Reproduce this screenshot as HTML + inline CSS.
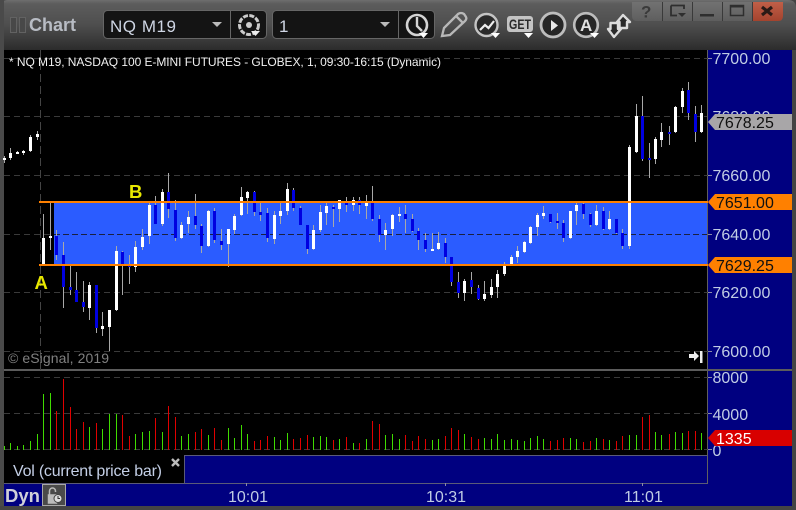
<!DOCTYPE html>
<html>
<head>
<meta charset="utf-8">
<title>Chart</title>
<style>
html,body{margin:0;padding:0;background:#444;width:796px;height:510px;overflow:hidden}
svg{display:block;position:absolute;left:0;top:0}
text{font-family:"Liberation Sans",sans-serif}
</style>
</head>
<body>
<svg width="796" height="510" viewBox="0 0 796 510" xmlns="http://www.w3.org/2000/svg">
<defs>
<linearGradient id="hd" x1="0" y1="0" x2="0" y2="1"><stop offset="0" stop-color="#6e6e6e"/><stop offset=".08" stop-color="#5c5c5c"/><stop offset=".5" stop-color="#4e4e4e"/><stop offset="1" stop-color="#2c2c2c"/></linearGradient>
<linearGradient id="wb" x1="0" y1="0" x2="0" y2="1"><stop offset="0" stop-color="#727272"/><stop offset="1" stop-color="#5e5e5e"/></linearGradient>
<linearGradient id="cl" x1="0" y1="0" x2="0" y2="1"><stop offset="0" stop-color="#c05f48"/><stop offset="1" stop-color="#a4432e"/></linearGradient>
</defs>
<rect width="796" height="510" fill="#444"/>
<path d="M0 50V8Q0 0 8 0H788Q796 0 796 8V50Z" fill="url(#hd)"/>
<rect x="0" y="0" width="4" height="510" fill="#4a4a4a"/>
<rect x="792" y="50" width="4" height="460" fill="#444"/>
<rect x="0" y="506" width="796" height="4" fill="#444"/>

<!-- panels -->
<rect x="4" y="50" width="703" height="319" fill="#000"/>
<rect x="708" y="50" width="84" height="456" fill="#000080"/>
<rect x="4" y="370" width="703" height="85" fill="#000"/>
<rect x="4" y="455" width="180" height="28" fill="#000"/>
<rect x="184" y="455" width="524" height="28" fill="#000080"/>
<rect x="4" y="483" width="788" height="23" fill="#000080"/>
<rect x="184" y="455" width="524" height="1" fill="#5a5a78"/>
<rect x="184" y="455" width="1" height="28" fill="#5a5a78"/>
<rect x="4" y="483" width="704" height="1" fill="#5a5a78"/>
<rect x="707" y="50" width="1" height="434" fill="#606060"/>
<rect x="4" y="369" width="788" height="2" fill="#5c5c5c"/>

<!-- band -->
<rect x="54" y="202" width="653" height="63" fill="#2b5cff"/>

<g shape-rendering="crispEdges" fill="none">
<!-- grid -->
<path d="M4 58.5H712M4 116.5H707M4 175.5H712M4 292.5H712M4 351.5H712M4 377.5H712M4 413.5H712M4 449.5H712" stroke="#3a3a3a" stroke-dasharray="6 4"/>
<path d="M4 234.5H54" stroke="#3a3a3a" stroke-dasharray="6 4"/>
<path d="M54 234.5H707" stroke="#1a2040" stroke-dasharray="6 3"/>
<path d="M40.5 50V370" stroke="#444" stroke-dasharray="8 4"/>
<!-- axis ticks -->
<path d="M708 58.500H712M708 175.500H712M708 234.500H712M708 292.500H712M708 351.500H712M708 377.500H712M708 413.500H712M708 449.500H712" stroke="#8a8aa8"/>
<path d="M246.500 483V486M445.500 483V486M642.500 483V486" stroke="#8a8aa8"/>

<!-- wicks -->
<path stroke="#a8a8a8" d="M4.5 156V163M10.5 148V160M17.5 151V154M23.5 150V155M30.5 135V152M37.5 131V140M43.5 214V265M50.5 202V250M56.5 230V260M63.5 242V308M70.5 264V295M76.5 272V302M83.5 281V312M89.5 282V320M96.5 285V333M102.5 312V336M109.5 310V351M116.5 246V311M122.5 251V295M129.5 255V284M135.5 241V272M142.5 229V250M149.5 203V244M155.5 196V224M162.5 189V226M168.5 173V218M175.5 200V241M181.5 222V239M188.5 211V233M195.5 194V229M201.5 224V253M208.5 210V247M214.5 208V243M221.5 229V250M228.5 229V267M234.5 214V234M241.5 187V216M247.5 191V214M254.5 191V216M260.5 201V221M267.5 208V242M274.5 211V244M280.5 203V224M287.5 183V215M293.5 188V211M300.5 206V225M307.5 225V254M313.5 225V250M320.5 205V232M326.5 203V225M333.5 205V227M339.5 200V222M346.5 197V212M353.5 197V211M359.5 197V214M366.5 195V219M372.5 186V221M379.5 215V242M385.5 223V250M392.5 214V236M399.5 207V222M405.5 205V233M412.5 214V232M418.5 228V250M425.5 233V252M432.5 233V251M438.5 232V250M445.5 238V263M451.5 257V286M458.5 272V298M464.5 279V301M471.5 272V294M478.5 285V300M484.5 281V301M491.5 279V298M497.5 270V298M504.5 262V276M511.5 255V266M517.5 246V263M524.5 241V253M530.5 226V244M537.5 213V236M543.5 206V219M550.5 214V223M557.5 213V229M563.5 220V242M570.5 211V239M576.5 203V225M583.5 203V219M590.5 213V227M596.5 205V226M603.5 207V230M609.5 211V230M616.5 219V234M622.5 229V249M629.5 145V249M636.5 104V153M642.5 96V161M649.5 143V178M655.5 137V164M661.5 123V147M669.5 126V145M675.5 106V133M682.5 88V113M688.5 82V120M695.5 106V142M701.5 105V133"/>
<!-- white bodies -->
<path stroke="#fff" stroke-width="3" d="M4.5 158V160M10.5 153V158M17.5 152V154M23.5 151V153M30.5 137V151M37.5 134V137M43.5 238V265M50.5 236V238M89.5 285V308M102.5 326V329M109.5 310V327M116.5 251V310M135.5 247V267M142.5 237V247M149.5 205V236M162.5 192V224M181.5 225V238M188.5 217V224M208.5 211V246M228.5 229V244M234.5 216V230M241.5 197V215M247.5 192V198M274.5 215V239M280.5 211V216M287.5 189V211M313.5 230V249M320.5 212V230M326.5 206V213M339.5 200V209M353.5 200V205M366.5 202V206M385.5 230V235M392.5 215V229M399.5 214V216M432.5 249V251M438.5 243V249M464.5 281V293M484.5 294V299M491.5 287V295M497.5 274V287M504.5 265V274M511.5 257V265M517.5 251V257M524.5 242V252M530.5 227V243M537.5 215V227M543.5 213V216M570.5 211V238M576.5 205V211M596.5 211V225M609.5 219V229M629.5 147V246M636.5 116V152M655.5 139V159M661.5 132V140M675.5 107V132M682.5 91V107M701.5 113V132"/>
<!-- blue bodies -->
<path stroke="#0000e0" stroke-width="3" d="M56.5 236V255M63.5 255V287M70.5 287V290M76.5 290V302M83.5 302V307M96.5 285V328M122.5 252V265M129.5 265V267M155.5 205V224M168.5 192V209M175.5 210V238M195.5 216V225M201.5 226V246M214.5 211V240M221.5 241V245M254.5 192V212M260.5 212V215M267.5 213V238M293.5 190V208M300.5 208V225M307.5 225V249M333.5 207V209M346.5 203V205M359.5 200V205M372.5 203V219M379.5 219V235M405.5 214V219M412.5 219V231M418.5 231V240M425.5 240V249M445.5 243V257M451.5 257V282M458.5 282V293M471.5 280V287M478.5 288V299M550.5 214V222M557.5 221V223M563.5 223V238M583.5 204V214M590.5 214V225M603.5 211V229M616.5 219V233M622.5 233V246M642.5 116V159M649.5 158V160M669.5 132V134M688.5 90V113M695.5 114V132"/>

<!-- orange lines -->
<rect x="39" y="201" width="669" height="2" fill="#ff8000"/>
<rect x="39" y="264" width="669" height="2" fill="#ff8000"/>

<!-- green vol -->
<path stroke="#3fdc00" d="M4.5 446V450M10.5 443V450M17.5 446V450M23.5 445V450M30.5 441V450M37.5 434V450M43.5 394V450M50.5 393V450M89.5 427V450M102.5 429V450M109.5 414V450M116.5 414V450M135.5 434V450M142.5 432V450M149.5 431V450M162.5 432V450M181.5 436V450M188.5 434V450M208.5 435V450M228.5 428V450M234.5 438V450M241.5 425V450M247.5 434V450M274.5 437V450M280.5 440V450M287.5 433V450M313.5 437V450M320.5 436V450M326.5 437V450M339.5 439V450M353.5 443V450M366.5 439V450M385.5 435V450M392.5 434V450M399.5 439V450M432.5 440V450M438.5 439V450M464.5 434V450M484.5 438V450M491.5 439V450M497.5 434V450M504.5 440V450M511.5 439V450M517.5 440V450M524.5 441V450M530.5 438V450M537.5 436V450M543.5 439V450M570.5 438V450M576.5 439V450M596.5 438V450M609.5 440V450M629.5 435V450M636.5 435V450M655.5 432V450M661.5 435V450M675.5 432V450M682.5 433V450M701.5 433V450"/>
<!-- red vol -->
<path stroke="#e00000" d="M56.5 411V450M63.5 379V450M70.5 407V450M76.5 429V450M83.5 422V450M96.5 423V450M122.5 415V450M129.5 436V450M155.5 418V450M168.5 406V450M175.5 417V450M195.5 432V450M201.5 429V450M214.5 428V450M221.5 440V450M254.5 441V450M260.5 440V450M267.5 436V450M293.5 439V450M300.5 438V450M307.5 435V450M333.5 440V450M346.5 437V450M359.5 443V450M372.5 421V450M379.5 424V450M405.5 435V450M412.5 441V450M418.5 436V450M425.5 439V450M445.5 436V450M451.5 428V450M458.5 430V450M471.5 437V450M478.5 439V450M550.5 441V450M557.5 440V450M563.5 438V450M583.5 442V450M590.5 441V450M603.5 439V450M616.5 441V450M622.5 436V450M642.5 417V450M649.5 415V450M669.5 434V450M688.5 431V450M695.5 431V450"/>
</g>

<!-- chart text -->
<text x="9" y="66" font-size="12" fill="#f0f0f0" textLength="432">* NQ M19, NASDAQ 100 E-MINI FUTURES - GLOBEX, 1, 09:30-16:15 (Dynamic)</text>
<text x="34.500" y="289" font-size="18.500" font-weight="bold" fill="#e8e800">A</text>
<text x="129" y="198" font-size="18.500" font-weight="bold" fill="#e8e800">B</text>
<text x="8" y="363" font-size="14" fill="#808080" textLength="101">© eSignal, 2019</text>
<text x="13" y="476" font-size="16" fill="#c4cfe6" textLength="149">Vol (current price bar)</text>
<path d="M172 459l7 7M179 459l-7 7" stroke="#bbb" stroke-width="2.400" fill="none"/>
<path d="M689 354h5v-3l5 5-5 5v-3h-5z" fill="#eee"/><rect x="700" y="351" width="2.500" height="12" fill="#eee"/>

<!-- axis labels -->
<g font-size="16" fill="#c0cce4">
<text x="712.500" y="64">7700.00</text>
<text x="712.500" y="122">7680.00</text>
<text x="712.500" y="181">7660.00</text>
<text x="712.500" y="240">7640.00</text>
<text x="712.500" y="298">7620.00</text>
<text x="712.500" y="357">7600.00</text>
<text x="712.500" y="383">8000</text>
<text x="712.500" y="420">4000</text>
<text x="712.500" y="456">0</text>
<text x="228" y="502">10:01</text>
<text x="426" y="502">10:31</text>
<text x="624" y="502">11:01</text>
</g>

<!-- price tags -->
<path d="M708 122l7-8h77v16h-77z" fill="#a8a6a8"/>
<text x="716" y="128" font-size="16" fill="#111">7678.25</text>
<path d="M708 202l7-8h77v16h-77z" fill="#ff8000"/>
<text x="716" y="208" font-size="16" fill="#111">7651.00</text>
<path d="M708 265l7-8h77v16h-77z" fill="#ff8000"/>
<text x="716" y="271" font-size="16" fill="#111">7629.25</text>
<path d="M708 438l7-8h77v16h-77z" fill="#d80000"/>
<text x="716" y="444" font-size="16" fill="#fff">1335</text>

<!-- bottom bar -->
<text x="5" y="502" font-size="18.500" font-weight="bold" fill="#d0d0d8">Dyn</text>
<rect x="42.500" y="484.500" width="23" height="21" fill="#4a4a4a" stroke="#a8a8a8"/>
<path d="M48.500 503v-8h8v8zM49.500 495v-4a3 3 0 0 1 6 0v1" fill="none" stroke="#bbb" stroke-width="1.500"/>
<rect x="49" y="495" width="7" height="8" fill="#bbb"/>
<circle cx="58" cy="498.500" r="4" fill="#ddd" stroke="#444"/>
<path d="M58 496v2.500h2" stroke="#333" fill="none"/>

<!-- title area -->
<rect x="10.500" y="17.500" width="6" height="15" fill="#484848" stroke="#626262"/>
<rect x="19.500" y="17.500" width="6" height="15" fill="#484848" stroke="#626262"/>
<text x="29" y="31" font-size="18" font-weight="bold" fill="#b8bcc4">Chart</text>

<!-- combos -->
<rect x="103.500" y="10.500" width="163" height="28" rx="4" fill="#141414" stroke="#666"/>
<path d="M230.500 11V38" stroke="#666"/>
<text x="110" y="32" font-size="17" fill="#cfd6e4" textLength="66">NQ M19</text>
<path d="M212 22h10l-5 5z" fill="#bbb"/>
<circle cx="249" cy="25" r="9.500" fill="none" stroke="#ccc" stroke-width="3" stroke-dasharray="5 1.400"/>
<circle cx="249" cy="25" r="3" fill="#ccc"/>
<path d="M251 31h9l-4.500 5z" fill="#eee"/>

<rect x="272.500" y="10.500" width="162" height="28" rx="4" fill="#141414" stroke="#666"/>
<path d="M398.500 11V38" stroke="#666"/>
<text x="279" y="32" font-size="17" fill="#cfd6e4">1</text>
<path d="M380 22h10l-5 5z" fill="#bbb"/>
<circle cx="417" cy="25" r="10" fill="none" stroke="#d4d4d4" stroke-width="2.600"/>
<path d="M417 17V26L422 31" fill="none" stroke="#d4d4d4" stroke-width="2.400"/>
<path d="M419 33h9l-4.500 5z" fill="#fff"/>

<!-- pencil -->
<path d="M442 36L444 28 458 14Q461 12 464 14L466 17Q467 19 465 21L450 35ZM456 16L463 23" fill="none" stroke="#b8b8b8" stroke-width="2.300"/>
<!-- chart circle -->
<circle cx="486.500" cy="25" r="11" fill="#2a2a2a" stroke="#c4c4c4" stroke-width="2.400"/>
<path d="M480 30L485 25 488.500 28 494 21" fill="none" stroke="#eee" stroke-width="2.200"/>
<path d="M491 33h9l-4.500 5z" fill="#fff"/>
<!-- GET -->
<rect x="507" y="16" width="26" height="16" rx="3" fill="#c4c4c4"/>
<text x="509" y="29" font-size="14" font-weight="bold" fill="#2a2a2a" textLength="22" lengthAdjust="spacingAndGlyphs">GET</text>
<path d="M524 33h9l-4.500 5z" fill="#fff"/>
<!-- play -->
<circle cx="553" cy="25" r="12" fill="#262626" stroke="#bdbdbd" stroke-width="2.800"/>
<path d="M551 20V31L558 25.500Z" fill="#e8e8e8"/>
<!-- A -->
<circle cx="586" cy="25" r="11.800" fill="#262626" stroke="#bdbdbd" stroke-width="2.600"/>
<text x="580" y="31" font-size="17" font-weight="bold" fill="#e0e0e0">A</text>
<path d="M590 33h9l-4.500 5z" fill="#fff"/>
<!-- up/down arrows -->
<path d="M614 37L608 29H610.500V23H618V29H621Z" fill="#2a2a2a" stroke="#dcdcdc" stroke-width="2.400" stroke-linejoin="round"/>
<path d="M623 15L630 22H627V28H619.500V22H617Z" fill="#2a2a2a" stroke="#dcdcdc" stroke-width="2.400" stroke-linejoin="round"/>

<!-- window buttons -->
<path d="M632 2H752V21H637Q632 21 632 16Z" fill="url(#wb)"/>
<path d="M752 2H783V16Q783 21 778 21H752Z" fill="url(#cl)"/>
<path d="M662.500 2V21M692.500 2V21M722.500 2V21M752.500 2V21" stroke="#3a3a3a"/>
<text x="641" y="17.500" font-size="17" font-weight="bold" fill="#3a3a3a">?</text>
<path d="M671 5.500H684V9M671 5.500V15.500H677" fill="none" stroke="#2e2e2e" stroke-width="1.800"/>
<path d="M678 13h8l-4 4z" fill="#2e2e2e"/>
<rect x="700" y="14" width="14" height="2.500" fill="#2e2e2e"/>
<rect x="730.500" y="5.500" width="13" height="10" fill="none" stroke="#2e2e2e" stroke-width="1.500"/>
<rect x="730" y="5" width="14" height="2.500" fill="#2e2e2e"/>
<path d="M762 7l10 8M772 7l-10 8" stroke="#2a1a16" stroke-width="3.200" fill="none"/>
</svg>
</body>
</html>
